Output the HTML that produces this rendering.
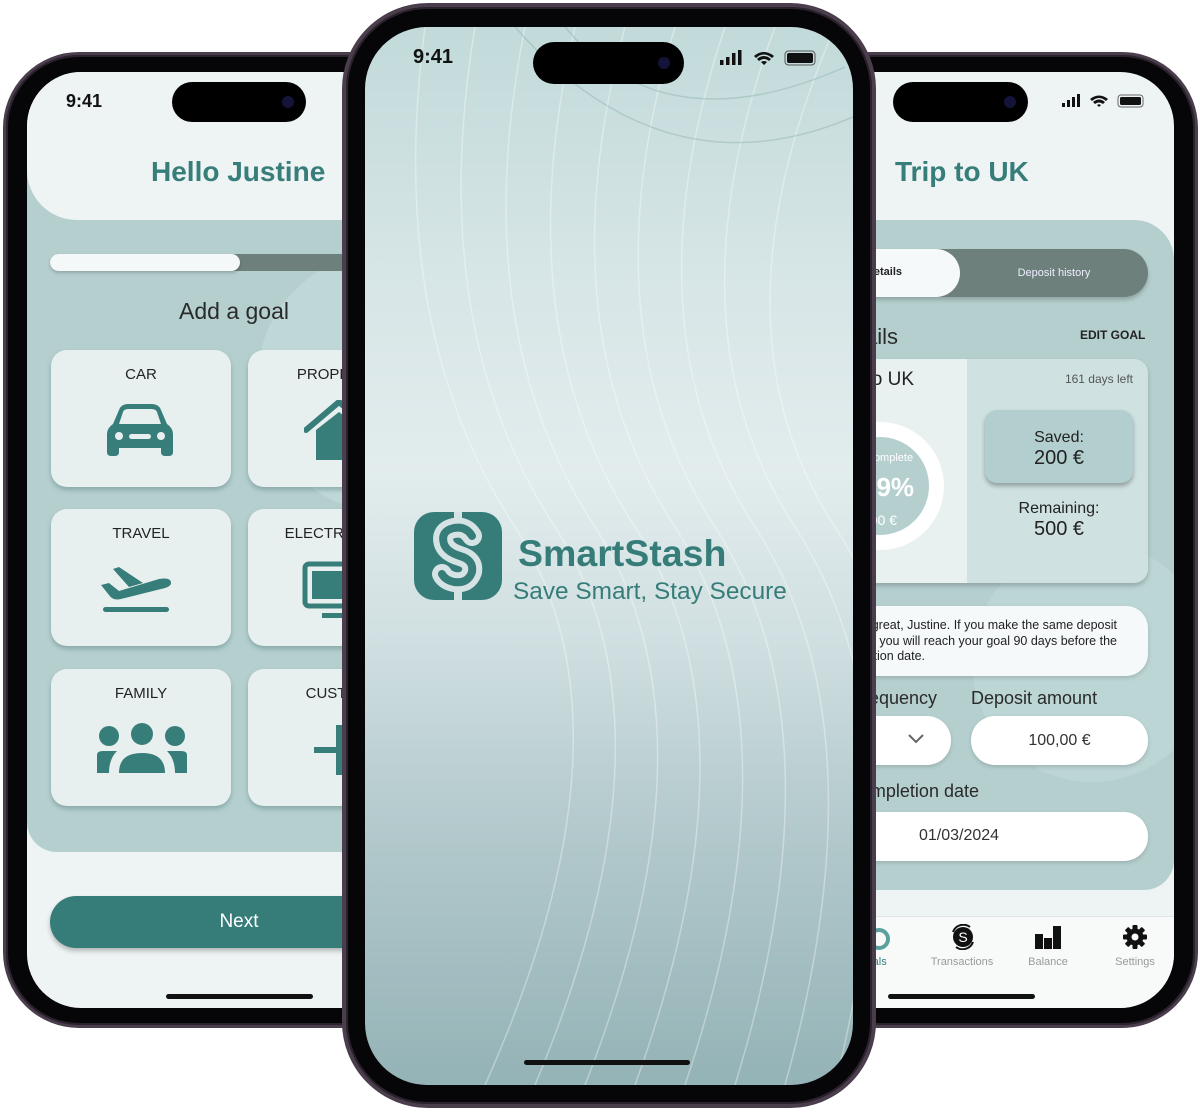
<!DOCTYPE html>
<html><head><meta charset="utf-8"><style>
*{margin:0;padding:0;box-sizing:border-box}
body{width:1200px;height:1112px;background:#fff;position:relative;overflow:hidden;font-family:"Liberation Sans",sans-serif}
.a{position:absolute}
.frame{position:absolute;background:#060507;border:3px solid #4a3d4c;box-shadow:inset 0 0 0 2px #2a222c}
.scr{position:absolute;overflow:hidden}
.isl{position:absolute;background:#000;border-radius:22px}
.cam{position:absolute;width:12px;height:12px;border-radius:50%;background:#14143a;top:50%;margin-top:-6px}
.card{position:absolute;width:180px;height:137px;background:#e8f0ef;border-radius:16px;box-shadow:0 3px 5px rgba(60,100,100,.35)}
.card .t{position:absolute;top:16px;left:0;width:180px;text-align:center;font-size:15px;color:#222}
.teal{color:#377e7a}
</style></head><body>

<!-- LEFT PHONE -->
<div class="frame" style="left:3px;top:52px;width:520px;height:976px;border-radius:76px"></div>
<div class="scr" style="left:27px;top:72px;width:480px;height:936px;border-radius:54px;background:#eef3f4">
  <div class="a" style="left:0;top:100px;width:480px;height:680px;background:#b5cfcf;border-radius:0 0 0 30px"></div>
  <div class="a" style="left:230px;top:180px;width:260px;height:260px;border-radius:50%;background:#bfd7d7"></div>
  <div class="a" style="left:0;top:0;width:480px;height:148px;background:#eef3f4;border-radius:0 0 0 50px"></div>
  <div class="a" style="left:39px;top:19px;font-size:18px;font-weight:bold;color:#111">9:41</div>
  <div class="isl" style="left:145px;top:10px;width:134px;height:40px"><div class="cam" style="right:12px"></div></div>
  <div class="a teal" style="left:124px;top:84px;font-size:28px;font-weight:bold">Hello Justine</div>
  <div class="a" style="left:23px;top:182px;width:460px;height:17px;background:#6e807c;border-radius:9px 0 0 9px"></div>
  <div class="a" style="left:23px;top:182px;width:190px;height:17px;background:#f4f8f8;border-radius:9px;box-shadow:0 2px 3px rgba(0,0,0,.2)"></div>
  <div class="a" style="left:152px;top:226px;font-size:23px;color:#2a2a2a">Add a goal</div>

  <div class="card" style="left:24px;top:278px"><div class="t">CAR</div>
    <svg class="a" style="left:54px;top:54px" width="70" height="56" viewBox="0 0 70 56"><path d="M14 6 Q16 0 24 0 H46 Q54 0 56 6 L62 20 Q68 24 68 30 V48 Q68 52 64 52 H60 Q56 52 56 48 V44 H14 V48 Q14 52 10 52 H6 Q2 52 2 48 V30 Q2 24 8 20 Z M18 8 L14 20 H56 L52 8 Q51 5 46 5 H24 Q19 5 18 8 Z" fill="#377e7a" fill-rule="evenodd"/><circle cx="14" cy="32" r="4" fill="#e8f0ef"/><circle cx="56" cy="32" r="4" fill="#e8f0ef"/><rect x="24" y="30" width="22" height="5" rx="2.5" fill="#e8f0ef"/></svg>
  </div>
  <div class="card" style="left:221px;top:278px"><div class="t">PROPERTY</div>
    <svg class="a" style="left:56px;top:50px" width="70" height="62" viewBox="0 0 70 62"><path d="M2 30 L35 2 L68 30" stroke="#377e7a" stroke-width="6" fill="none" stroke-linecap="round"/><path d="M12 30 L35 12 L58 30 V60 H12 Z" fill="#377e7a"/></svg>
  </div>
  <div class="card" style="left:24px;top:437px"><div class="t">TRAVEL</div>
    <svg class="a" style="left:48px;top:52px" width="76" height="56" viewBox="0 0 76 56"><path d="M2 24 L10 22 L20 30 L60 18 Q72 16 72 22 Q72 26 62 28 L22 38 Q14 40 10 34 Z M14 8 L20 6 L44 22 L30 26 Z" fill="#377e7a"/><rect x="4" y="46" width="66" height="5" rx="2.5" fill="#377e7a"/></svg>
  </div>
  <div class="card" style="left:221px;top:437px"><div class="t">ELECTRONICS</div>
    <svg class="a" style="left:54px;top:52px" width="70" height="60" viewBox="0 0 70 60"><rect x="3" y="3" width="60" height="42" rx="4" fill="none" stroke="#377e7a" stroke-width="5"/><rect x="10" y="10" width="46" height="28" fill="#377e7a"/><rect x="20" y="52" width="30" height="5" fill="#377e7a"/></svg>
  </div>
  <div class="card" style="left:24px;top:597px"><div class="t">FAMILY</div>
    <svg class="a" style="left:46px;top:54px" width="90" height="56" viewBox="0 0 90 56"><circle cx="12" cy="13" r="10" fill="#377e7a"/><circle cx="45" cy="11" r="11" fill="#377e7a"/><circle cx="78" cy="13" r="10" fill="#377e7a"/><path d="M0 50 V32 Q0 28 6 28 H20 Q12 36 12 50 Z M90 50 V32 Q90 28 84 28 H70 Q78 36 78 50 Z M22 50 Q22 30 45 30 Q68 30 68 50 Z" fill="#377e7a"/></svg>
  </div>
  <div class="card" style="left:221px;top:597px"><div class="t">CUSTOM</div>
    <svg class="a" style="left:66px;top:56px" width="50" height="50"><rect x="0" y="22" width="50" height="6" fill="#377e7a"/><rect x="22" y="0" width="6" height="50" fill="#377e7a"/></svg>
  </div>

  <div class="a" style="left:23px;top:824px;width:420px;height:52px;background:#367d79;border-radius:26px;box-shadow:0 3px 5px rgba(0,0,0,.25)"><div class="a" style="left:0;width:378px;top:15px;text-align:center;color:#fff;font-size:19px">Next</div></div>
  <div class="a" style="left:139px;top:922px;width:147px;height:5px;background:#111;border-radius:3px"></div>
</div>

<!-- RIGHT PHONE -->
<div class="frame" style="left:678px;top:52px;width:520px;height:976px;border-radius:76px"></div>
<div class="scr" style="left:722px;top:72px;width:452px;height:936px;border-radius:0 54px 54px 0;background:#eef3f4">
  <div class="a" style="left:-10px;top:148px;width:462px;height:670px;background:#b5cfcf;border-radius:0 40px 30px 0"></div>
  <div class="a" style="left:250px;top:470px;width:240px;height:240px;border-radius:50%;background:#bcd5d5"></div>
  <div class="isl" style="left:171px;top:10px;width:135px;height:40px"><div class="cam" style="right:12px"></div></div>
  <svg class="a" style="left:340px;top:21px" width="86" height="16" viewBox="0 0 86 16"><rect x="0" y="10" width="3" height="4" fill="#111"/><rect x="5" y="7" width="3" height="7" fill="#111"/><rect x="10" y="4" width="3" height="10" fill="#111"/><rect x="15" y="1" width="3" height="13" fill="#111"/><path d="M28 6 Q37 -1 46 6 L44 8 Q37 2 30 8 Z M31 9 Q37 4 43 9 L41 11 Q37 8 33 11 Z M35 12 L37 14 L39 12 Q37 10.5 35 12 Z" fill="#111"/><rect x="56" y="2" width="25" height="12" rx="3" fill="none" stroke="#666" stroke-width="1"/><rect x="58" y="4" width="21" height="8" rx="1.5" fill="#111"/></svg>
  <div class="a teal" style="left:173px;top:84px;font-size:28px;font-weight:bold">Trip to UK</div>

  <div class="a" style="left:40px;top:177px;width:386px;height:48px;background:#6e807c;border-radius:24px;box-shadow:0 3px 4px rgba(0,0,0,.2)"></div>
  <div class="a" style="left:40px;top:177px;width:198px;height:48px;background:#f6f9f9;border-radius:24px"><div class="a" style="right:58px;top:17px;font-size:11px;font-weight:bold;color:#222">Details</div></div>
  <div class="a" style="left:238px;top:195px;width:188px;text-align:center;font-size:11px;color:#eef">Deposit history</div>

  <div class="a" style="right:276px;top:252px;font-size:22px;color:#2a2a2a;white-space:nowrap">Goal details</div>
  <div class="a" style="left:358px;top:256px;font-size:12px;font-weight:bold;color:#222">EDIT GOAL</div>

  <div class="a" style="left:40px;top:287px;width:386px;height:224px;background:#cfe2e1;border-radius:14px;box-shadow:0 3px 5px rgba(0,0,0,.2);overflow:hidden">
    <div class="a" style="left:0;top:0;width:205px;height:224px;background:#e8f1f0"></div>
  </div>
  <div class="a" style="right:260px;top:297px;font-size:19px;color:#222;white-space:nowrap">Trip to UK</div>
  <div class="a" style="right:41px;top:300px;font-size:12px;color:#555">161 days left</div>
  <div class="a" style="left:94px;top:350px;width:128px;height:128px;border-radius:50%;border:15px solid #fff;background:#b5cfcf"></div>
  <div class="a" style="left:144px;top:380px;font-size:11px;color:#fff">Complete</div>
  <div class="a" style="left:140px;top:400px;font-size:26px;font-weight:bold;color:#fff">29%</div>
  <div class="a" style="left:140px;top:440px;font-size:14px;color:#fff">200 €</div>
  <div class="a" style="left:263px;top:338px;width:148px;height:73px;background:#b2cece;border-radius:12px;box-shadow:0 3px 5px rgba(0,0,0,.3);text-align:center;color:#222"><div style="font-size:16px;margin-top:19px">Saved:</div><div style="font-size:20px">200 €</div></div>
  <div class="a" style="left:263px;top:428px;width:148px;text-align:center;color:#222"><div style="font-size:16px">Remaining:</div><div style="font-size:20px">500 €</div></div>

  <div class="a" style="left:40px;top:534px;width:386px;height:70px;background:#f6f9f9;border-radius:22px;box-shadow:0 2px 4px rgba(0,0,0,.15)"></div>
  <div class="a" style="right:57px;top:546px;font-size:12.5px;color:#222;white-space:nowrap;text-align:right;line-height:15.5px">That's great, Justine. If you make the same deposit<br>every month you will reach your goal 90 days before the</div>
  <div class="a" style="right:249px;top:577px;font-size:12.5px;color:#222;white-space:nowrap">completion date.</div>

  <div class="a" style="right:237px;top:616px;font-size:18px;color:#2a2a2a;white-space:nowrap">Deposit frequency</div>
  <div class="a" style="left:249px;top:616px;font-size:18px;color:#2a2a2a">Deposit amount</div>
  <div class="a" style="left:40px;top:644px;width:189px;height:49px;background:#fff;border-radius:24px;box-shadow:0 2px 4px rgba(0,0,0,.15)"></div>
  <svg class="a" style="left:186px;top:662px" width="16" height="10"><path d="M1 1 L8 8 L15 1" stroke="#666" stroke-width="2" fill="none"/></svg>
  <div class="a" style="left:249px;top:644px;width:177px;height:49px;background:#fff;border-radius:24px;box-shadow:0 2px 4px rgba(0,0,0,.15);text-align:center;line-height:49px;font-size:16px;color:#333">100,00 €</div>
  <div class="a" style="right:195px;top:709px;font-size:18px;color:#2a2a2a;white-space:nowrap">Completion date</div>
  <div class="a" style="left:40px;top:740px;width:386px;height:49px;background:#fff;border-radius:24px;box-shadow:0 2px 4px rgba(0,0,0,.15)"><div class="a" style="left:157px;top:15px;font-size:16px;color:#333">01/03/2024</div></div>

  <div class="a" style="left:0;top:844px;width:452px;height:92px;background:#f8fafa;border-top:1px solid #dfe5e5"></div>
  <div class="a teal" style="left:136px;top:884px;font-size:11px">Goals</div>
  <svg class="a" style="left:146px;top:854px" width="22" height="24"><circle cx="11" cy="13" r="9" fill="none" stroke="#5aa09c" stroke-width="4"/></svg>
  <svg class="a" style="left:228px;top:852px" width="26" height="26" viewBox="0 0 26 26"><circle cx="13" cy="13" r="10" fill="#111"/><path d="M3 8 A11 11 0 0 1 20 3 M23 18 A11 11 0 0 1 6 23" stroke="#111" stroke-width="2" fill="none"/><text x="13" y="18" text-anchor="middle" font-size="14" fill="#fff" font-family="Liberation Sans">S</text></svg>
  <div class="a" style="left:190px;top:884px;width:100px;text-align:center;font-size:11px;color:#999">Transactions</div>
  <svg class="a" style="left:312px;top:852px" width="28" height="26"><rect x="1" y="10" width="8" height="15" fill="#111"/><rect x="10" y="14" width="8" height="11" fill="#111"/><rect x="19" y="2" width="8" height="23" fill="#111"/></svg>
  <div class="a" style="left:276px;top:884px;width:100px;text-align:center;font-size:11px;color:#999">Balance</div>
  <svg class="a" style="left:401px;top:853px" width="24" height="24" viewBox="0 0 24 24"><g fill="#111"><rect x="9.5" y="0" width="5" height="24" rx="1"/><rect x="9.5" y="0" width="5" height="24" rx="1" transform="rotate(45 12 12)"/><rect x="9.5" y="0" width="5" height="24" rx="1" transform="rotate(90 12 12)"/><rect x="9.5" y="0" width="5" height="24" rx="1" transform="rotate(135 12 12)"/><circle cx="12" cy="12" r="8.5"/></g><circle cx="12" cy="12" r="3.5" fill="#f8fafa"/></svg>
  <div class="a" style="left:363px;top:884px;width:100px;text-align:center;font-size:11px;color:#999">Settings</div>
  <div class="a" style="left:166px;top:922px;width:147px;height:5px;background:#111;border-radius:3px"></div>
</div>

<!-- CENTER PHONE -->
<div class="frame" style="left:342px;top:3px;width:534px;height:1105px;border-radius:86px;border-width:4px"></div>
<div class="scr" style="left:365px;top:27px;width:488px;height:1058px;border-radius:62px;background:linear-gradient(180deg,#c2dada 0%,#d8e6e7 25%,#e2eced 42%,#d0dfe1 58%,#b4cacd 75%,#94b3b6 100%)">
  <svg class="a" style="left:0;top:0" width="488" height="1058" viewBox="0 0 488 1058" fill="none" stroke="#fff" stroke-opacity=".35" stroke-width="1.5">
    <path d="M60 0 Q20 300 150 500 T120 1058"/><path d="M110 0 Q60 300 190 500 T170 1058"/><path d="M160 0 Q100 300 230 500 T220 1058"/><path d="M210 0 Q140 300 270 500 T270 1058"/><path d="M260 0 Q180 300 310 500 T320 1058"/><path d="M310 0 Q220 300 350 500 T370 1058"/><path d="M360 0 Q260 300 390 500 T420 1058"/><path d="M410 0 Q300 300 430 500 T470 1058"/><path d="M470 0 Q340 300 470 500 T520 1058"/>
    <path d="M200 0 Q300 120 480 40" stroke="#6f9a98" stroke-opacity=".3"/><path d="M150 0 Q300 170 488 90" stroke="#6f9a98" stroke-opacity=".3"/>
  </svg>
  <div class="a" style="left:48px;top:19px;font-size:20px;font-weight:bold;color:#111">9:41</div>
  <div class="isl" style="left:168px;top:15px;width:151px;height:42px;border-radius:21px"><div class="cam" style="right:14px"></div></div>
  <svg class="a" style="left:355px;top:22px" width="100" height="18" viewBox="0 0 100 18"><rect x="0" y="11" width="3.5" height="5" fill="#111"/><rect x="6" y="8" width="3.5" height="8" fill="#111"/><rect x="12" y="4" width="3.5" height="12" fill="#111"/><rect x="18" y="1" width="3.5" height="15" fill="#111"/><path d="M34 7 Q44 -1 54 7 L52 9 Q44 2 36 9 Z M37 10 Q44 4 51 10 L49 12 Q44 8 39 12 Z M41 13 L44 16 L47 13 Q44 11 41 13 Z" fill="#111"/><rect x="65" y="2" width="30" height="14" rx="3.5" fill="none" stroke="#555" stroke-width="1"/><rect x="67" y="4" width="26" height="10" rx="2" fill="#111"/></svg>
  <svg class="a" style="left:49px;top:485px" width="88" height="88" viewBox="0 0 88 88"><rect x="0" y="0" width="88" height="88" rx="20" fill="#367d79"/><path d="M58 24 Q52 14 40 16 Q26 19 30 32 Q33 40 46 44 Q60 48 58 60 Q54 72 40 70 Q31 68 28 62" stroke="#d6e3e4" stroke-width="20" fill="none" stroke-linecap="round"/><path d="M58 24 Q52 14 40 16 Q26 19 30 32 Q33 40 46 44 Q60 48 58 60 Q54 72 40 70 Q31 68 28 62" stroke="#367d79" stroke-width="8" fill="none" stroke-linecap="round"/><rect x="40" y="0" width="8" height="10" fill="#d6e3e4"/><rect x="40" y="78" width="8" height="10" fill="#d6e3e4"/></svg>
  <div class="a" style="left:153px;top:505px;font-size:37.5px;font-weight:bold;color:#367d79">SmartStash</div>
  <div class="a" style="left:148px;top:551px;font-size:24.4px;color:#367d79">Save Smart, Stay Secure</div>
  <div class="a" style="left:159px;top:1033px;width:166px;height:5px;background:#111;border-radius:3px"></div>
</div>
</body></html>
